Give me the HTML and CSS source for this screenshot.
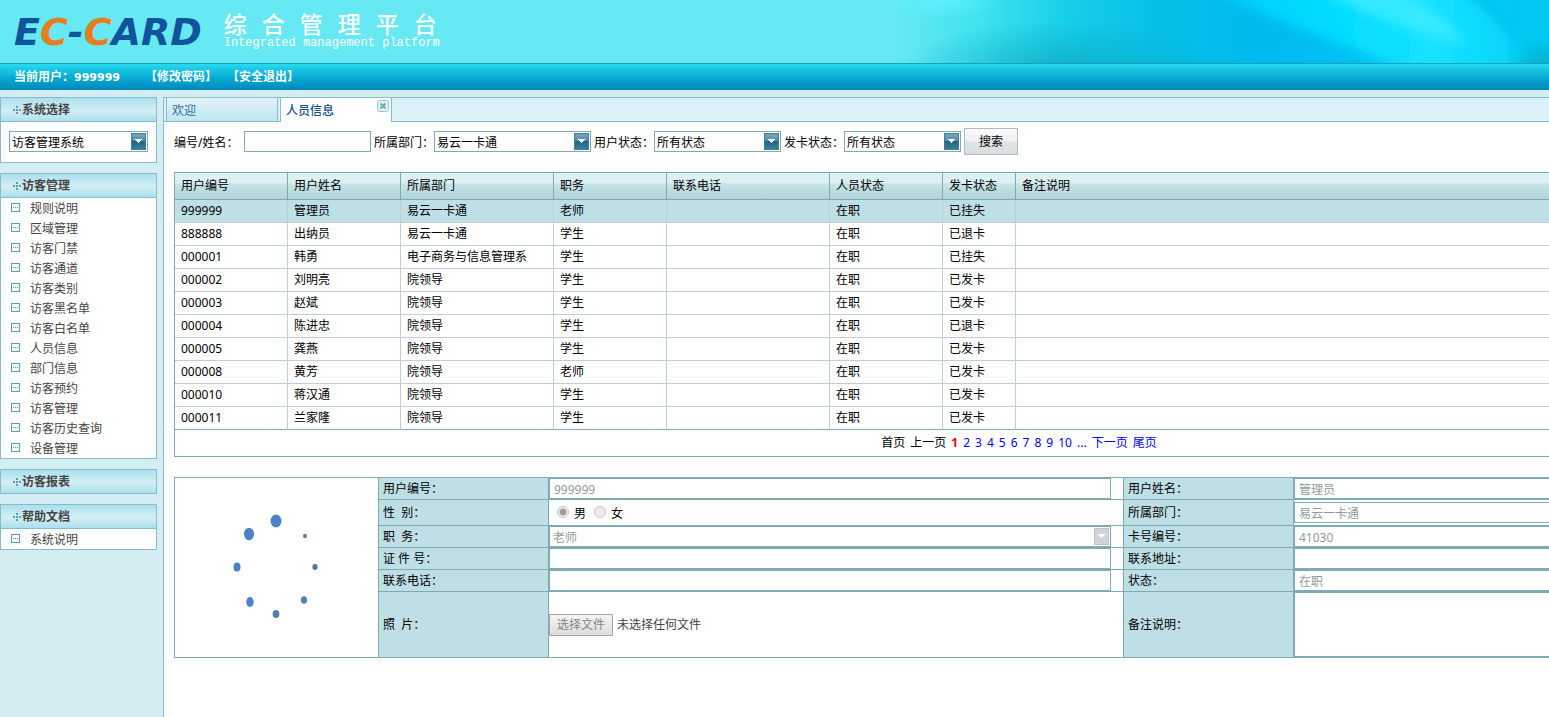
FILE: index.html
```html
<!DOCTYPE html>
<html lang="zh-CN">
<head>
<meta charset="utf-8">
<title>综合管理平台</title>
<link rel="stylesheet" href="styles.css">
</head>
<body>
<header class="banner">
  <div class="logo" aria-label="EC-CARD">E<span class="logo-accent">C</span>-<span class="logo-accent">C</span>ARD</div>
  <div class="brand">
    <h1 class="brand-title"><span>综</span><span>合</span><span>管</span><span>理</span><span>平</span><span>台</span></h1>
    <p class="brand-sub">Integrated management platform</p>
  </div>
  <svg class="banner-art" viewBox="0 0 669 63" preserveAspectRatio="none" aria-hidden="true">
    <defs>
      <linearGradient id="sea" x1="0" y1="0" x2="1" y2="0">
        <stop offset="0" stop-color="#66e9f2"/><stop offset=".03" stop-color="#64e8f1"/>
        <stop offset=".15" stop-color="#3fe2ef"/><stop offset=".28" stop-color="#17cfe8"/>
        <stop offset=".42" stop-color="#06bfe6"/><stop offset=".56" stop-color="#00b9ee"/>
        <stop offset=".8" stop-color="#00c4f8"/><stop offset="1" stop-color="#00c8f0"/>
      </linearGradient>
      <linearGradient id="ray" x1="0" y1="0" x2="1" y2="0">
        <stop offset="0" stop-color="#00c6ff"/><stop offset=".4" stop-color="#00dcff"/>
        <stop offset=".7" stop-color="#16e2ff"/><stop offset="1" stop-color="#00d0fa"/>
      </linearGradient>
      <radialGradient id="shade"><stop offset="0" stop-color="#0aa4bc" stop-opacity=".7"/><stop offset="1" stop-color="#0aa4bc" stop-opacity="0"/></radialGradient>
      <radialGradient id="light"><stop offset="0" stop-color="#5cf4ff" stop-opacity=".9"/><stop offset="1" stop-color="#5cf4ff" stop-opacity="0"/></radialGradient>
      <filter id="soft" x="-30%" y="-60%" width="160%" height="220%"><feGaussianBlur stdDeviation="6"/></filter>
    </defs>
    <rect width="669" height="63" fill="url(#sea)"/>
    <ellipse cx="180" cy="70" rx="160" ry="50" fill="url(#shade)"/>
    <ellipse cx="60" cy="0" rx="60" ry="20" fill="url(#light)"/>
    <path d="M300 -20 L570 -20 Q625 25 660 80 L550 80 Q450 40 300 -20Z" fill="url(#ray)" filter="url(#soft)"/>
    <path d="M430 -15 L510 -15 Q560 15 590 45 Q500 25 430 -15Z" fill="#50f0ff" opacity=".6" filter="url(#soft)"/>
    <ellipse cx="669" cy="66" rx="50" ry="28" fill="url(#shade)"/>
  </svg>
</header>

<nav class="userbar">
  <span>当前用户：<span class="user-id">999999</span></span>
  <a href="#">【修改密码】</a>
  <a href="#">【安全退出】</a>
</nav>

<div class="shell">
  <aside class="sidebar">
    <section class="panel">
      <h2 class="panel-head"><svg class="cross"><use href="#cross"/></svg><label for="system">系统选择</label></h2>
      <div class="panel-pick"><select class="select" id="system"><option>访客管理系统</option></select></div>
    </section>
    <section class="panel">
      <h2 class="panel-head"><svg class="cross"><use href="#cross"/></svg>访客管理</h2>
      <ul class="menu">
        <li><svg class="leaf"><use href="#leaf"/></svg><a href="#">规则说明</a></li>
        <li><svg class="leaf"><use href="#leaf"/></svg><a href="#">区域管理</a></li>
        <li><svg class="leaf"><use href="#leaf"/></svg><a href="#">访客门禁</a></li>
        <li><svg class="leaf"><use href="#leaf"/></svg><a href="#">访客通道</a></li>
        <li><svg class="leaf"><use href="#leaf"/></svg><a href="#">访客类别</a></li>
        <li><svg class="leaf"><use href="#leaf"/></svg><a href="#">访客黑名单</a></li>
        <li><svg class="leaf"><use href="#leaf"/></svg><a href="#">访客白名单</a></li>
        <li><svg class="leaf"><use href="#leaf"/></svg><a href="#">人员信息</a></li>
        <li><svg class="leaf"><use href="#leaf"/></svg><a href="#">部门信息</a></li>
        <li><svg class="leaf"><use href="#leaf"/></svg><a href="#">访客预约</a></li>
        <li><svg class="leaf"><use href="#leaf"/></svg><a href="#">访客管理</a></li>
        <li><svg class="leaf"><use href="#leaf"/></svg><a href="#">访客历史查询</a></li>
        <li><svg class="leaf"><use href="#leaf"/></svg><a href="#">设备管理</a></li>
      </ul>
    </section>
    <section class="panel">
      <h2 class="panel-head"><svg class="cross"><use href="#cross"/></svg>访客报表</h2>
    </section>
    <section class="panel">
      <h2 class="panel-head"><svg class="cross"><use href="#cross"/></svg>帮助文档</h2>
      <ul class="menu">
        <li><svg class="leaf"><use href="#leaf"/></svg><a href="#">系统说明</a></li>
      </ul>
    </section>
  </aside>

  <main class="main">
    <div class="tabs">
      <a class="tab" href="#">欢迎</a>
      <a class="tab tab-active" href="#">人员信息</a>
      <button class="tab-close" type="button" aria-label="关闭">
        <svg width="12" height="12" viewBox="0 0 12 12"><rect x=".5" y=".5" width="11" height="11" rx="2.5" fill="#e4f5f7" stroke="#92c9d2"/><path d="M3.5 3.5l5 5M8.5 3.5l-5 5" stroke="#74adba" stroke-width="2.4"/></svg>
      </button>
    </div>

    <form class="filter">
      <label class="filter-first" for="q">编号/姓名：</label><input class="field q" id="q" type="text">
      <label for="dept">所属部门：</label><select class="select s-dept" id="dept"><option>易云一卡通</option></select>
      <label for="ustate">用户状态：</label><select class="select s-user" id="ustate"><option>所有状态</option></select>
      <label for="cstate">发卡状态：</label><select class="select s-card" id="cstate"><option>所有状态</option></select>
      <button class="search" type="button">搜索</button>
    </form>

    <div class="wide">
      <table class="grid">
        <colgroup><col class="c1"><col class="c2"><col class="c3"><col class="c4"><col class="c5"><col class="c6"><col class="c7"><col></colgroup>
        <thead><tr><th>用户编号</th><th>用户姓名</th><th>所属部门</th><th>职务</th><th>联系电话</th><th>人员状态</th><th>发卡状态</th><th>备注说明</th></tr></thead>
        <tbody>
          <tr class="on"><td>999999</td><td>管理员</td><td>易云一卡通</td><td>老师</td><td></td><td>在职</td><td>已挂失</td><td></td></tr>
          <tr><td>888888</td><td>出纳员</td><td>易云一卡通</td><td>学生</td><td></td><td>在职</td><td>已退卡</td><td></td></tr>
          <tr><td>000001</td><td>韩勇</td><td>电子商务与信息管理系</td><td>学生</td><td></td><td>在职</td><td>已挂失</td><td></td></tr>
          <tr><td>000002</td><td>刘明亮</td><td>院领导</td><td>学生</td><td></td><td>在职</td><td>已发卡</td><td></td></tr>
          <tr><td>000003</td><td>赵斌</td><td>院领导</td><td>学生</td><td></td><td>在职</td><td>已发卡</td><td></td></tr>
          <tr><td>000004</td><td>陈进忠</td><td>院领导</td><td>学生</td><td></td><td>在职</td><td>已退卡</td><td></td></tr>
          <tr><td>000005</td><td>龚燕</td><td>院领导</td><td>学生</td><td></td><td>在职</td><td>已发卡</td><td></td></tr>
          <tr><td>000008</td><td>黄芳</td><td>院领导</td><td>老师</td><td></td><td>在职</td><td>已发卡</td><td></td></tr>
          <tr><td>000010</td><td>蒋汉通</td><td>院领导</td><td>学生</td><td></td><td>在职</td><td>已发卡</td><td></td></tr>
          <tr><td>000011</td><td>兰家隆</td><td>院领导</td><td>学生</td><td></td><td>在职</td><td>已发卡</td><td></td></tr>
        </tbody>
      </table>
      <nav class="pager">
        <span>首页</span><span>上一页</span><b class="page-now">1</b><a href="#">2</a><a href="#">3</a><a href="#">4</a><a href="#">5</a><a href="#">6</a><a href="#">7</a><a href="#">8</a><a href="#">9</a><a href="#">10</a><a href="#">...</a><a href="#">下一页</a><a href="#">尾页</a>
      </nav>

      <form class="detail">
        <div class="photo">
          <svg width="90" height="110" viewBox="0 0 90 110" fill="#4a82c3" aria-hidden="true">
            <ellipse cx="46" cy="11" rx="5.5" ry="6.5"/><ellipse cx="19" cy="24" rx="5" ry="6.3"/>
            <ellipse cx="7" cy="57" rx="3.5" ry="4.6"/><ellipse cx="20" cy="92" rx="3.7" ry="5"/>
            <ellipse cx="46" cy="104" rx="3.4" ry="4.1" fill="#4f82b2"/><ellipse cx="74" cy="90" rx="3.1" ry="3.8" fill="#4f82b2"/>
            <ellipse cx="85" cy="57" rx="2.6" ry="2.9" fill="#4c7ba2"/><ellipse cx="75" cy="26" rx="2" ry="2.2" fill="#66808f"/>
          </svg>
        </div>
        <label class="name" for="f1">用户编号：</label><div class="cell"><input class="field" id="f1" value="999999" disabled></div>
        <label class="name" for="f2">用户姓名：</label><div class="cell"><input class="field" id="f2" value="管理员" disabled></div>
        <span class="name">性&nbsp; 别：</span><div class="cell radios"><input class="radio" type="radio" name="sex" id="male" checked disabled><label for="male">男</label><input class="radio" type="radio" name="sex" id="female" disabled><label for="female">女</label></div>
        <label class="name" for="f3">所属部门：</label><div class="cell"><input class="field" id="f3" value="易云一卡通" disabled></div>
        <label class="name" for="f4">职&nbsp; 务：</label><div class="cell"><select class="select" id="f4" disabled><option>老师</option></select></div>
        <label class="name" for="f5">卡号编号：</label><div class="cell"><input class="field" id="f5" value="41030" disabled></div>
        <label class="name" for="f6">证 件 号：</label><div class="cell"><input class="field" id="f6"></div>
        <label class="name" for="f7">联系地址：</label><div class="cell"><input class="field" id="f7"></div>
        <label class="name" for="f8">联系电话：</label><div class="cell"><input class="field" id="f8"></div>
        <label class="name" for="f9">状态：</label><div class="cell"><input class="field" id="f9" value="在职" disabled></div>
        <span class="name">照&nbsp; 片：</span><div class="cell"><button class="file" type="button" disabled>选择文件</button><span class="file-note">未选择任何文件</span></div>
        <label class="name" for="f10">备注说明：</label><div class="cell"><textarea class="field note" id="f10"></textarea></div>
      </form>
    </div>
  </main>
</div>

<svg class="defs" aria-hidden="true">
  <symbol id="cross" viewBox="0 0 8 8"><path d="M3 0h2v2H3zM3 3h2v2H3zM3 6h2v2H3zM0 3h2v2H0zM6 3h2v2H6z" fill="#5a9fb1"/></symbol>
  <symbol id="leaf" viewBox="0 0 9 9"><rect x=".5" y=".5" width="8" height="8" fill="#fff" stroke="#5a9fb1"/><path d="M2 4h1v1H2zM4 4h1v1H4zM6 4h1v1H6z" fill="#5a9fb1"/></symbol>
</svg>
</body>
</html>
```
FILE: styles.css
```css
* { box-sizing: border-box; }

body {
  margin: 0;
  min-height: 100vh;
  display: flex;
  flex-direction: column;
  overflow: hidden;
  background: #d4edf2;
  color: #000;
  font: 12px/20px "Noto Sans", "Noto Sans CJK SC", sans-serif;
}

input, select, button, textarea { font: inherit; color: inherit; margin: 0; }
a { color: inherit; text-decoration: none; }
h1, h2, p, ul { margin: 0; padding: 0; }
ul { list-style: none; }
.defs { display: none; }

.banner {
  position: relative;
  display: flex;
  height: 64px;
  padding-left: 14px;
  gap: 22px;
  background: #66e9f2;
  border-bottom: 1px solid #1a9fbc;
}
.banner-art {
  position: absolute;
  top: 0;
  right: 0;
  width: 669px;
  height: 63px;
}
.logo {
  font: italic bold 38px/64px "DejaVu Sans", sans-serif;
  color: #10559a;
}
.logo-accent { color: #e87d1e; }
.brand { padding-top: 12px; color: #fff; }
.brand-title {
  display: flex;
  gap: 15px;
  font-size: 23px;
  line-height: 24px;
  font-weight: 500;
}
.brand-sub { font: 12px/14px "Liberation Mono", monospace; }

.userbar {
  display: flex;
  height: 26px;
  padding-left: 14px;
  line-height: 26px;
  font-weight: bold;
  color: #fff;
  background: linear-gradient(#27daf2, #05a9d0 55%, #0088bb);
}
.userbar a:nth-child(2) { margin-left: 25px; }
.userbar a:nth-child(3) { margin-left: 10px; }
.user-id { font: bold 11px "DejaVu Sans", sans-serif; }

.shell { flex: 1; display: flex; padding-top: 7px; }
.sidebar {
  width: 157px;
  flex: none;
  display: flex;
  flex-direction: column;
  gap: 10px;
}
.panel { border: 1px solid #86bccb; background: #fff; }
.panel-head {
  display: flex;
  align-items: center;
  height: 23px;
  padding-left: 12px;
  font-size: 12px;
  font-weight: bold;
  color: #444;
  background: linear-gradient(#a9e0ee, #d4eef4 55%, #a9e0ee);
}
.panel-head + * { border-top: 1px solid #86bccb; }
.cross { width: 8px; height: 8px; margin-right: 1px; }
.panel-pick { padding: 9px 8px 10px; }
.panel-pick .select { display: block; width: 100%; }
.menu li { display: flex; height: 20px; padding-left: 10px; line-height: 22px; color: #444; }
.leaf { width: 9px; height: 9px; margin: 5px 10px 0 0; }

.field, .select {
  height: 21px;
  padding: 1px 4px 0;
  border: 1px solid #7dabb1;
  border-radius: 0;
  outline: none;
  background-color: #fff;
}
.select {
  appearance: none;
  padding-left: 2px;
  background-repeat: no-repeat;
  background-position: right 1px center;
  background-image: url("data:image/svg+xml,%3Csvg xmlns='http://www.w3.org/2000/svg' width='15' height='17'%3E%3Cdefs%3E%3ClinearGradient id='g' x2='0' y2='1'%3E%3Cstop stop-color='%2378a9be'/%3E%3Cstop offset='.45' stop-color='%23538ea9'/%3E%3Cstop offset='.5' stop-color='%23226586'/%3E%3Cstop offset='1' stop-color='%233b7d9a'/%3E%3C/linearGradient%3E%3C/defs%3E%3Crect x='.5' y='.5' width='14' height='16' fill='url(%23g)' stroke='%233f7d99'/%3E%3Cpath d='M4 6h7v1h-1v1H9v1H8v1H7V9H6V8H5V7H4z' fill='%23fff'/%3E%3C/svg%3E");
}
.select:disabled {
  opacity: 1;
  padding-left: 3px;
  background-image: url("data:image/svg+xml,%3Csvg xmlns='http://www.w3.org/2000/svg' width='15' height='17'%3E%3Crect x='.5' y='.5' width='14' height='16' fill='%23ced6da' stroke='%23bcc4c6'/%3E%3Cpath d='M4 6h7v1h-1v1H9v1H8v1H7V9H6V8H5V7H4z' fill='%23fff'/%3E%3C/svg%3E");
}
.field:disabled, .select:disabled { color: #8f9a9d; }

.main {
  flex: 1;
  min-width: 0;
  margin-left: 6px;
  border: solid #86bccb;
  border-width: 1px 0 0 1px;
  background: #fff;
  overflow: hidden;
}
.tabs {
  display: flex;
  gap: 2px;
  height: 24px;
  padding-left: 2px;
  background: #dcf0f7;
  border-bottom: 1px solid #86bccb;
}
.tab {
  width: 112px;
  height: 23px;
  padding-left: 5px;
  line-height: 26px;
  color: #336ba0;
  border: solid #86bccb;
  border-width: 0 1px;
  background: linear-gradient(#e2f4f9, #bfe6f0);
}
.tab-active { height: 24px; color: #1b4d8c; font-weight: 500; background: #fff; }
.tab-close {
  width: 12px;
  height: 12px;
  margin: 2px 0 0 -17px;
  padding: 0;
  border: 0;
  background: none;
}
.tab-close svg { display: block; }

.filter {
  display: flex;
  align-items: center;
  height: 27px;
  margin: 6px 0 17px 10px;
}
.filter > * { flex: none; }
.filter label { width: 60px; line-height: 21px; padding-top: 1px; }
.filter .filter-first { width: 70px; }
.filter .field, .filter .select { margin-right: 3px; }
.q { width: 127px; }
.s-dept { width: 157px; }
.s-user { width: 127px; }
.s-card { width: 117px; }
.search {
  width: 54px;
  height: 27px;
  padding: 0;
  border: 1px solid #b2bcc0;
  background: linear-gradient(#f9fbfb, #eff1f1 48%, #e2e5e6 52%, #d9dcdd);
}

.wide { min-width: 1690px; margin-left: 10px; }
.grid {
  width: 100%;
  table-layout: fixed;
  border: solid #7dabb1;
  border-width: 1px 0 0 1px;
  border-spacing: 0;
}
.c1, .c2, .c4, .c6 { width: 113px; }
.c3 { width: 153px; }
.c5 { width: 163px; }
.c7 { width: 73px; }
.grid th, .grid td {
  height: 23px;
  padding: 0 6px;
  text-align: left;
  font-weight: normal;
  border: solid #bed0d6;
  border-width: 0 1px 1px 0;
}
.grid thead tr th {
  height: 27px;
  border-color: #7dabb1;
  background: linear-gradient(#dff2f3, #d9f0f1 38%, #c9e4e6 42%, #b0d4d9);
}
.grid .on td { background: #bedfe6; }
.grid tr:last-child td { border-bottom-color: #7dabb1; }
.pager {
  display: flex;
  justify-content: center;
  gap: 5px;
  height: 27px;
  line-height: 26px;
  border: solid #7dabb1;
  border-width: 0 1px 1px;
}
.pager a { color: #00e; }
.page-now { color: #e00; }

.detail {
  display: grid;
  grid-template-columns: 204px 170px 575px 170px 1fr;
  grid-template-rows: 22px 26px 22px 22px 22px 66px;
  margin-top: 20px;
  border: solid #7dabb1;
  border-width: 1px 0 0 1px;
}
.photo, .name, .cell {
  display: flex;
  align-items: center;
  border: solid #7dabb1;
  border-width: 0 1px 1px 0;
}
.photo { grid-row: 1 / 7; padding: 0 0 6px 55px; }
.name { padding-left: 4px; background: #bedfe6; }
.cell .field, .cell .select { width: 562px; }
.cell .note { display: block; height: 65px; resize: none; }
.radios { padding: 3px 0 0 8px; }
.radio {
  appearance: none;
  width: 12px;
  height: 12px;
  margin: 0 5px 5px 0;
  border: 1px solid #c4c4c4;
  border-radius: 50%;
  background: #ededed;
}
.radio:checked { background: radial-gradient(circle, #9f9f9f 0 3px, #ededed 4px); }
.radios label { margin-right: 8px; line-height: 22px; }
.file {
  height: 22px;
  padding: 0 7px;
  line-height: 20px;
  color: #868686;
  border: 1px solid #a5a5a5;
  border-radius: 1px;
  background: linear-gradient(#f5f5f5, #dcdcdc);
}
.file-note { margin-left: 4px; color: #444; }
```
